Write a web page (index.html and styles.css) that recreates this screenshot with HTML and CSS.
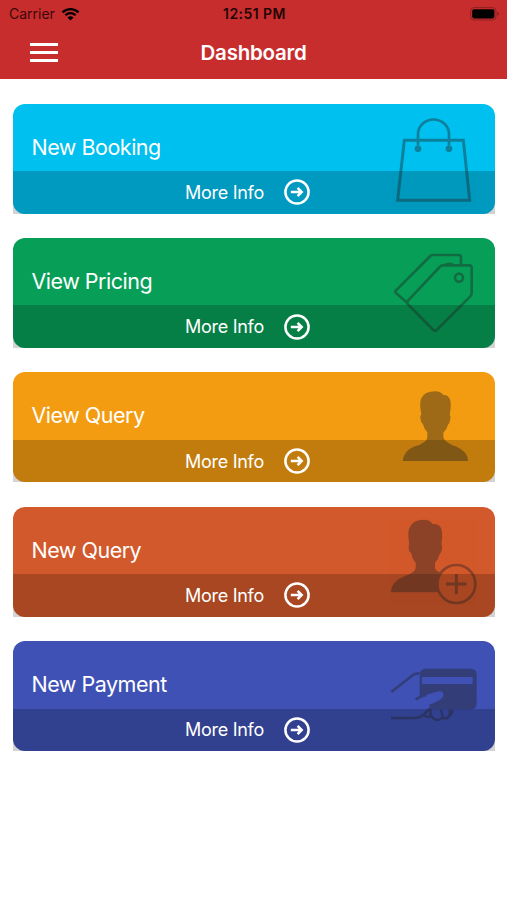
FILE: index.html
```html
<!DOCTYPE html>
<html lang="en">
<head>
  <meta charset="UTF-8" />
  <meta name="viewport" content="width=device-width, initial-scale=1.0" />
  <title>Dashboard</title>
  <link rel="stylesheet" href="styles.css">
</head>
<body>
  <svg width="0" height="0" class="defs">
    <symbol id="arrow" viewBox="0 0 26 26">
      <circle cx="13" cy="13" r="11.6" fill="none" stroke="currentColor" stroke-width="2.5"/>
      <path d="M6.800 13h11M13.600 8.900l4.100 4.100-4.100 4.100" fill="none" stroke="currentColor" stroke-width="2.500"/>
    </symbol>
  </svg>

  <header>
    <div class="status">
      <div class="carrier">
        <span>Carrier</span>
        <svg class="wifi" width="19" height="14" viewBox="0 0 18 14">
          <path d="M1 5.3a11.5 11.5 0 0 1 16 0M3.9 8.3a7.3 7.3 0 0 1 10.2 0" fill="none" stroke="#000" stroke-width="2.3"/>
          <path d="M9 13.6L5.9 10.5a4.4 4.4 0 0 1 6.2 0z"/>
        </svg>
      </div>
      <span class="time">12:51 PM</span>
      <svg class="battery" width="30" height="14" viewBox="0 0 30 14">
        <rect x=".6" y=".6" width="25.4" height="12.4" rx="3.4" fill="none" stroke="#8e2020" stroke-width="1"/>
        <rect x="2.2" y="2.2" width="22.2" height="9.2" rx="1.8"/>
        <path d="M27.3 4.8q1.8 .5 1.8 2t-1.8 2z" fill="#8e2020"/>
      </svg>
    </div>
    <div class="navbar">
      <div class="menu"><i></i><i></i><i></i></div>
      <h1>Dashboard</h1>
    </div>
  </header>

  <main>
    <section class="tile">
      <div class="card booking">
        <h2>New Booking</h2>
        <div class="more"><span>More Info</span><svg class="arrow"><use href="#arrow"/></svg></div>
        <svg class="icon" viewBox="15 25.5 300 330">
          <g fill="none" stroke="#222" stroke-width="9">
            <path d="M73 134H250L269 314H53z"/>
            <path d="M114 150V116a46.500 44 0 0 1 93 0V150" stroke-width="8"/>
          </g>
          <circle cx="114" cy="160" r="10"/>
          <circle cx="207" cy="160" r="10"/>
        </svg>
      </div>
    </section>

    <section class="tile">
      <div class="card pricing">
        <h2>View Pricing</h2>
        <div class="more"><span>More Info</span><svg class="arrow"><use href="#arrow"/></svg></div>
        <svg class="icon" viewBox="15 24 300 330">
          <g fill="none" stroke="#222" stroke-width="8" stroke-linejoin="round">
            <path d="M80 217L48 189Q44 185 48 181L151 78Q154 75 158 75H236Q243 75 243 82V105"/>
            <path d="M189 106H268Q275 106 275 113V190Q275 195 271 199L171 299Q165 305 159 299L84 223Q79 217 84 212L179 111Q183 106 189 106z"/>
            <path d="M192 105Q209 96 222 105" stroke-width="6"/>
            <circle cx="237" cy="143" r="12"/>
          </g>
        </svg>
      </div>
    </section>

    <section class="tile">
      <div class="card query">
        <h2>View Query</h2>
        <div class="more"><span>More Info</span><svg class="arrow"><use href="#arrow"/></svg></div>
        <svg class="icon" viewBox="15 22 300 330">
          <path d="M68 289Q71 258 105 245Q140 234 142 219V203Q131 192 129 179Q122 173 121 161Q120 153 124 149Q117 116 124 101Q133 80 166 80Q182 80 190 91Q204 90 210 104Q215 120 209 150Q213 154 211 163Q209 176 204 180Q201 193 190 204V218Q194 235 230 246Q263 260 264 289z"/>
        </svg>
      </div>
    </section>

    <section class="tile">
      <div class="card new-query">
        <h2>New Query</h2>
        <div class="more"><span>More Info</span><svg class="arrow"><use href="#arrow"/></svg></div>
        <svg class="icon" viewBox="15 20 300 330">
          <path d="M32 276Q35 242 70 229Q103 219 107 204V187Q96 175 94 160Q86 154 86 143Q85 136 88 132Q82 96 88 83Q98 58 132 58Q150 58 158 71Q179 70 184 85Q189 103 184 132Q188 136 186 146Q184 157 179 162Q175 177 165 187V204Q168 214 184 217A61 61 0 0 0 176 276z"/>
          <circle cx="229" cy="251" r="57" fill="none" stroke="#222" stroke-width="8"/>
          <path d="M229 221V282M198 251H260" fill="none" stroke="#222" stroke-width="9"/>
        </svg>
      </div>
    </section>

    <section class="tile">
      <div class="card payment">
        <h2>New Payment</h2>
        <div class="more"><span>More Info</span><svg class="arrow"><use href="#arrow"/></svg></div>
        <svg class="icon" viewBox="15 24 300 330">
          <path fill-rule="evenodd" d="M137 107H272Q290 107 290 125V211Q290 229 272 229H154L146 216Q177 204 187 194Q194 184 187 177Q180 172 168 177L119 192V125Q119 107 137 107zM126 132V153H278V132z"/>
          <g fill="none" stroke="#222" stroke-width="8" stroke-linejoin="round">
            <path d="M34 177L99 126Q105 121 118 121"/>
            <path d="M107 200Q116 192 138 186"/>
            <path d="M33 255H104Q124 254 136 240L152 224"/>
            <path d="M132 245Q140 255 152 249M153 226Q147 247 160 256Q174 267 186 255Q190 243 181 230M186 254Q202 260 209 247Q218 244 217 230M207 247Q213 239 207 230" stroke-width="7"/>
          </g>
        </svg>
      </div>
    </section>
  </main>
</body>
</html>
```

FILE: styles.css
```css
* {
  box-sizing: border-box;
}
body {
  margin: 0;
  font-family: Inter, 'Liberation Sans', sans-serif;
  background-color: #fff;
}
.defs {
  display: block;
}
header {
  height: 79px;
  background: #c82d2e;
}
.status {
  display: grid;
  grid-template-columns: 1fr auto 1fr;
  align-items: center;
  height: 27px;
  padding: 0 7px 0 9px;
  font-size: 14px;
}
.carrier {
  display: flex;
  align-items: center;
  gap: 6px;
  color: #3a0808;
}
.time {
  font-weight: 600;
  letter-spacing: 0.45px;
  color: #240505;
}
.battery {
  justify-self: end;
}
.navbar {
  display: grid;
  grid-template-columns: 58px 1fr 58px;
  align-items: center;
  height: 51px;
}
.menu {
  display: flex;
  flex-direction: column;
  gap: 5px;
  width: 28px;
  margin-left: 30px;
}
.menu i {
  height: 3px;
  background: #fff;
}
h1 {
  margin: 0;
  text-align: center;
  font-size: 20.5px;
  letter-spacing: -0.25px;
  font-weight: 600;
  color: #fff;
}
main {
  display: flex;
  flex-direction: column;
  gap: 24.4px;
  padding: 24.5px 12.5px 0 13px;
}
/* grey shows behind the bottom corners of the card */
.tile {
  height: 110px;
  background: linear-gradient(#fff 50%, #d3d3d3 50%);
  border-radius: 12px 12px 0 0;
}
.card {
  position: relative;
  display: flex;
  flex-direction: column;
  height: 110px;
  border-radius: 12px;
  overflow: hidden;
  color: #fff;
}
.booking {
  background: #00c0ef;
}
.pricing {
  background: #079f58;
}
.query {
  background: #f39c12;
}
.new-query {
  background: #d2592b;
}
.payment {
  background: #3f51b5;
}
h2 {
  flex: 1;
  margin: 0;
  padding: 28px 0 0 18.5px;
  font-size: 21.5px;
  letter-spacing: -0.5px;
  line-height: 30px;
  font-weight: 400;
}
.more {
  display: flex;
  align-items: center;
  gap: 20px;
  height: 42.5px;
  padding-left: 172px;
  background: rgba(0, 0, 0, 0.2);
  font-size: 18px;
  letter-spacing: -0.28px;
}
.arrow {
  width: 26px;
  height: 26px;
}
.icon {
  position: absolute;
  top: 0;
  right: 10px;
  width: 100px;
  height: 110px;
  fill: #222;
  opacity: 0.4;
}
```
